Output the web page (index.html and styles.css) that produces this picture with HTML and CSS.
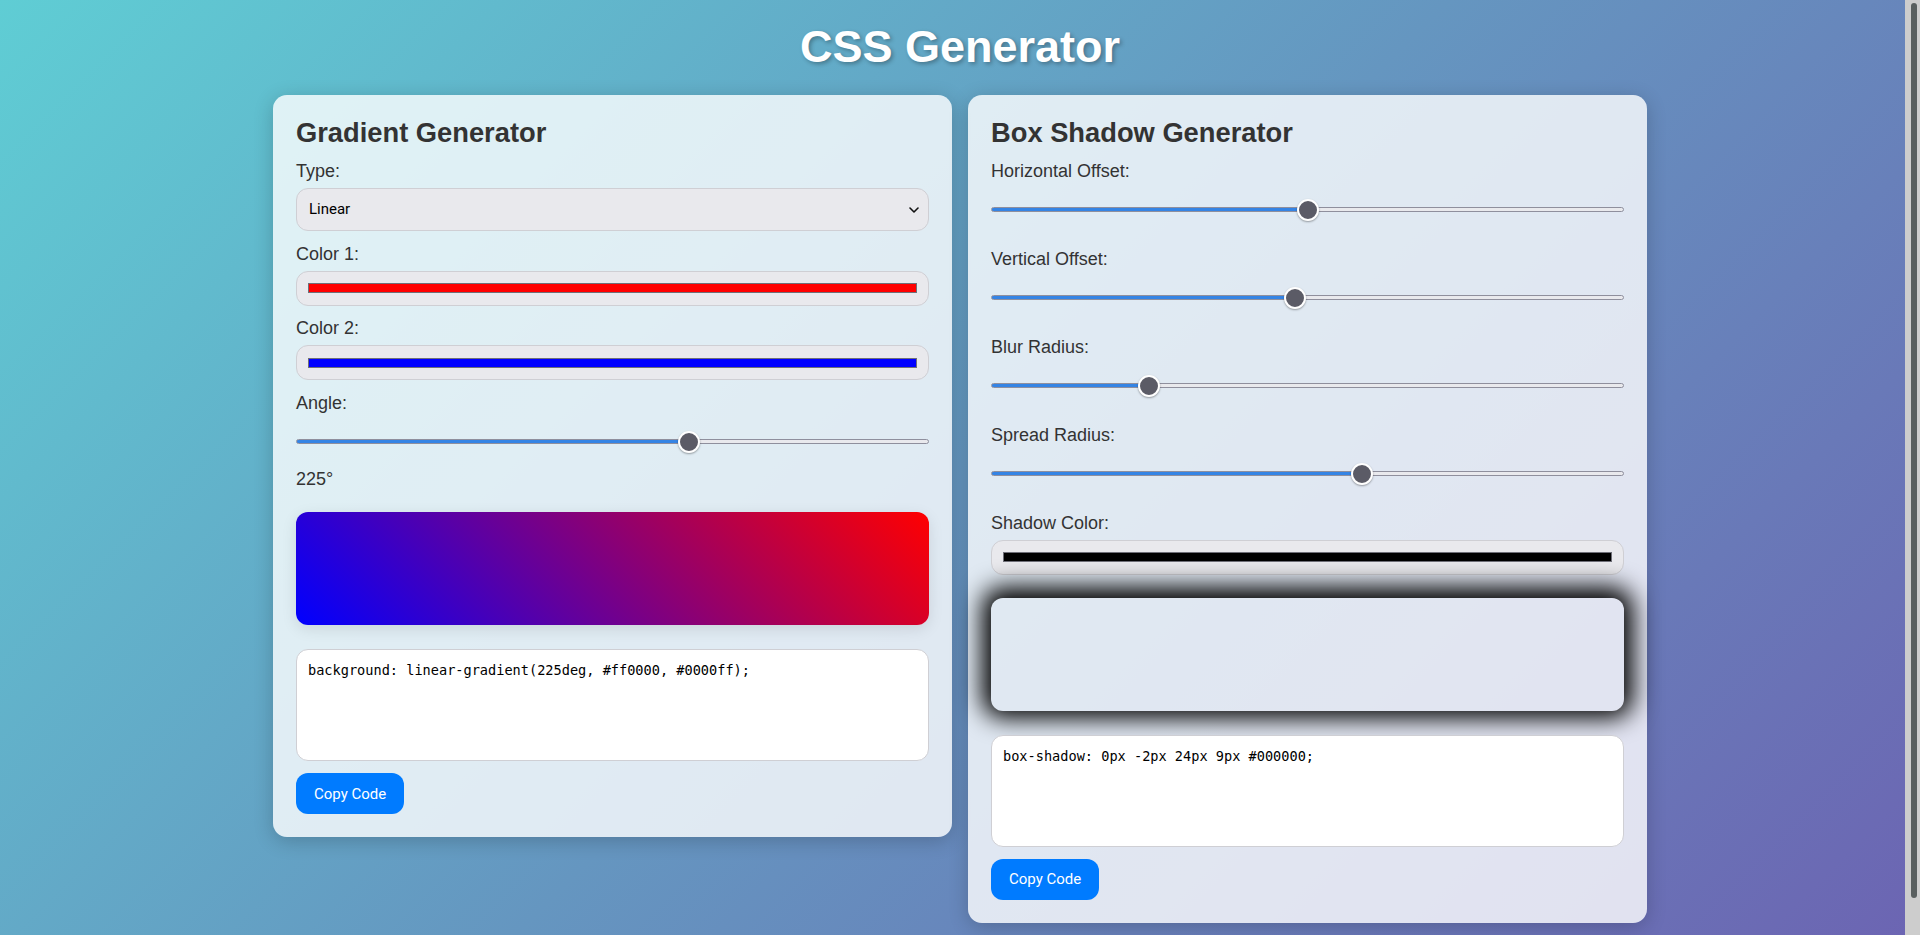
FILE: index.html
```html
<!DOCTYPE html>
<html lang="en">
<head>
<meta charset="utf-8">
<title>CSS Generator</title>
<link rel="stylesheet" href="styles.css">
</head>
<body>
  <h1 class="page-title">CSS Generator</h1>
  <main class="generators">
    <section class="card">
      <h2 class="card-title">Gradient Generator</h2>

      <label class="field-label" for="grad-type">Type:</label>
      <div class="select-wrap">
        <select id="grad-type" class="select">
          <option>Linear</option>
          <option>Radial</option>
        </select>
        <svg class="chevron" width="10" height="6" viewBox="0 0 10 6" aria-hidden="true"><path d="M1 1l4 4 4-4" fill="none" stroke="#111" stroke-width="1.6" stroke-linecap="round" stroke-linejoin="round"/></svg>
      </div>

      <label class="field-label" for="color1">Color 1:</label>
      <input id="color1" class="color-input" type="color" value="#ff0000">

      <label class="field-label" for="color2">Color 2:</label>
      <input id="color2" class="color-input" type="color" value="#0000ff">

      <label class="field-label" for="angle">Angle:</label>
      <input id="angle" class="range" type="range" min="0" max="360" value="225" style="--p: 0.625">
      <div class="range-value">225°</div>

      <div class="preview preview--gradient"></div>

      <textarea class="code" readonly>background: linear-gradient(225deg, #ff0000, #0000ff);</textarea>
      <button class="copy-btn" type="button">Copy Code</button>
    </section>

    <section class="card">
      <h2 class="card-title">Box Shadow Generator</h2>

      <label class="field-label" for="h-offset">Horizontal Offset:</label>
      <input id="h-offset" class="range range--spaced" type="range" min="-50" max="50" value="0" style="--p: 0.5">

      <label class="field-label" for="v-offset">Vertical Offset:</label>
      <input id="v-offset" class="range range--spaced" type="range" min="-50" max="50" value="-2" style="--p: 0.48">

      <label class="field-label" for="blur">Blur Radius:</label>
      <input id="blur" class="range range--spaced" type="range" min="0" max="100" value="24" style="--p: 0.24">

      <label class="field-label" for="spread">Spread Radius:</label>
      <input id="spread" class="range range--spaced" type="range" min="-50" max="50" value="9" style="--p: 0.59">

      <label class="field-label" for="shadow-color">Shadow Color:</label>
      <input id="shadow-color" class="color-input color-input--shadow" type="color" value="#000000">

      <div class="preview preview--shadow"></div>

      <textarea class="code" readonly>box-shadow: 0px -2px 24px 9px #000000;</textarea>
      <button class="copy-btn" type="button">Copy Code</button>
    </section>
  </main>
  <div class="scrollbar" aria-hidden="true"><div class="scrollbar-thumb"></div></div>
</body>
</html>
```

FILE: styles.css
```css
html {
  background: linear-gradient(135deg, #5fcdd4 0%, #6596c0 50%, #6c63b2 100%);
  min-height: 100%;
}

body {
  margin: 0;
  padding: 21px 0 55px;
  font-family: "Liberation Sans", Arial, sans-serif;
  color: #333;
}

.page-title {
  margin: 0 0 22px;
  text-align: center;
  font-size: 45px;
  font-weight: bold;
  color: #fff;
  text-shadow: 2px 2px 4px rgba(0, 0, 0, 0.3);
}

.generators {
  display: flex;
  align-items: flex-start;
  justify-content: center;
  gap: 16px;
}

.card {
  box-sizing: border-box;
  width: 679px;
  padding: 22px 23px 23px;
  border-radius: 14px;
  background: rgba(255, 255, 255, 0.8);
  box-shadow: 0 4px 20px rgba(0, 0, 0, 0.2);
}

.card-title {
  margin: 0 0 11.5px;
  font-size: 27.3px;
  line-height: 32px;
  font-weight: bold;
  color: #333;
}

.field-label {
  display: block;
  margin-bottom: 6px;
  font-size: 18px;
  color: #333;
}

/* select */
.select-wrap {
  position: relative;
  margin-bottom: 13px;
}

.select {
  -webkit-appearance: none;
  appearance: none;
  box-sizing: border-box;
  display: block;
  width: 100%;
  height: 43px;
  margin: 0;
  padding: 0 30px 0 12px;
  border: 1px solid #cfcfd4;
  border-radius: 12px;
  background: #e9e9ed;
  color: #000;
  font-family: Roboto, "Noto Sans", sans-serif;
  font-size: 15px;
}

.chevron {
  position: absolute;
  right: 10px;
  top: 19px;
}

/* color inputs */
.color-input {
  -webkit-appearance: none;
  appearance: none;
  box-sizing: border-box;
  display: block;
  width: 100%;
  height: 35px;
  margin: 0 0 12.5px;
  padding: 0 11px 0 11px;
  border: 1px solid #cfcfd4;
  border-radius: 12px;
  background: #e9e9ed;
  cursor: pointer;
}

.color-input::-webkit-color-swatch-wrapper {
  padding: 11.5px 0;
}

.color-input::-webkit-color-swatch {
  border: 1px solid #6f6f78;
  border-radius: 0;
}

.color-input--shadow {
  margin-bottom: 23px;
}

/* range */
.range {
  -webkit-appearance: none;
  appearance: none;
  display: block;
  width: 100%;
  height: 44px;
  margin: 0 0 5px;
  padding: 0;
  background: transparent;
}

.range--spaced {
  margin-bottom: 17px;
}

.range::-webkit-slider-runnable-track {
  height: 5px;
  border: 1px solid #8f8f9d;
  border-radius: 4px;
  background: linear-gradient(to right,
    #3584e4 0,
    #3584e4 calc(11px + (100% - 22px) * var(--p)),
    #e9e9ed calc(11px + (100% - 22px) * var(--p)),
    #e9e9ed 100%);
}

.range::-webkit-slider-thumb {
  -webkit-appearance: none;
  appearance: none;
  box-sizing: border-box;
  width: 22px;
  height: 22px;
  margin-top: -9.5px;
  border: 2px solid #fff;
  border-radius: 50%;
  background: #5b5b66;
  box-shadow: 0 1px 2px rgba(0, 0, 0, 0.35);
}

.range-value {
  margin-bottom: 22.5px;
  font-size: 18px;
  color: #333;
}

/* previews */
.preview {
  height: 113px;
  margin-bottom: 24px;
  border-radius: 12px;
}

.preview--gradient {
  background: linear-gradient(225deg, #ff0000, #0000ff);
  box-shadow: 0 4px 15px rgba(0, 0, 0, 0.1);
}

.preview--shadow {
  background: transparent;
  box-shadow: 0px -2px 24px 9px #000000;
}

/* code */
.code {
  box-sizing: border-box;
  display: block;
  width: 100%;
  height: 112px;
  margin: 0 0 12px;
  padding: 12px 11px;
  border: 1px solid #cfcfd4;
  border-radius: 12px;
  background: #fff;
  color: #000;
  font-family: "DejaVu Sans Mono", monospace;
  font-size: 13.6px;
  resize: none;
}

.copy-btn {
  display: block;
  height: 41px;
  padding: 0 18px;
  border: none;
  border-radius: 12px;
  background: #007bff;
  color: #fff;
  font-family: Roboto, "Noto Sans", sans-serif;
  font-size: 15px;
  cursor: pointer;
}

/* page scrollbar (overlay on the right edge of the window) */
.scrollbar {
  position: fixed;
  top: 0;
  right: 0;
  bottom: 0;
  width: 15px;
  background: #cdcdcd;
}

.scrollbar-thumb {
  position: absolute;
  top: 3px;
  left: 6px;
  width: 6px;
  height: 895px;
  border-radius: 3px;
  background: #595f5f;
}
```
